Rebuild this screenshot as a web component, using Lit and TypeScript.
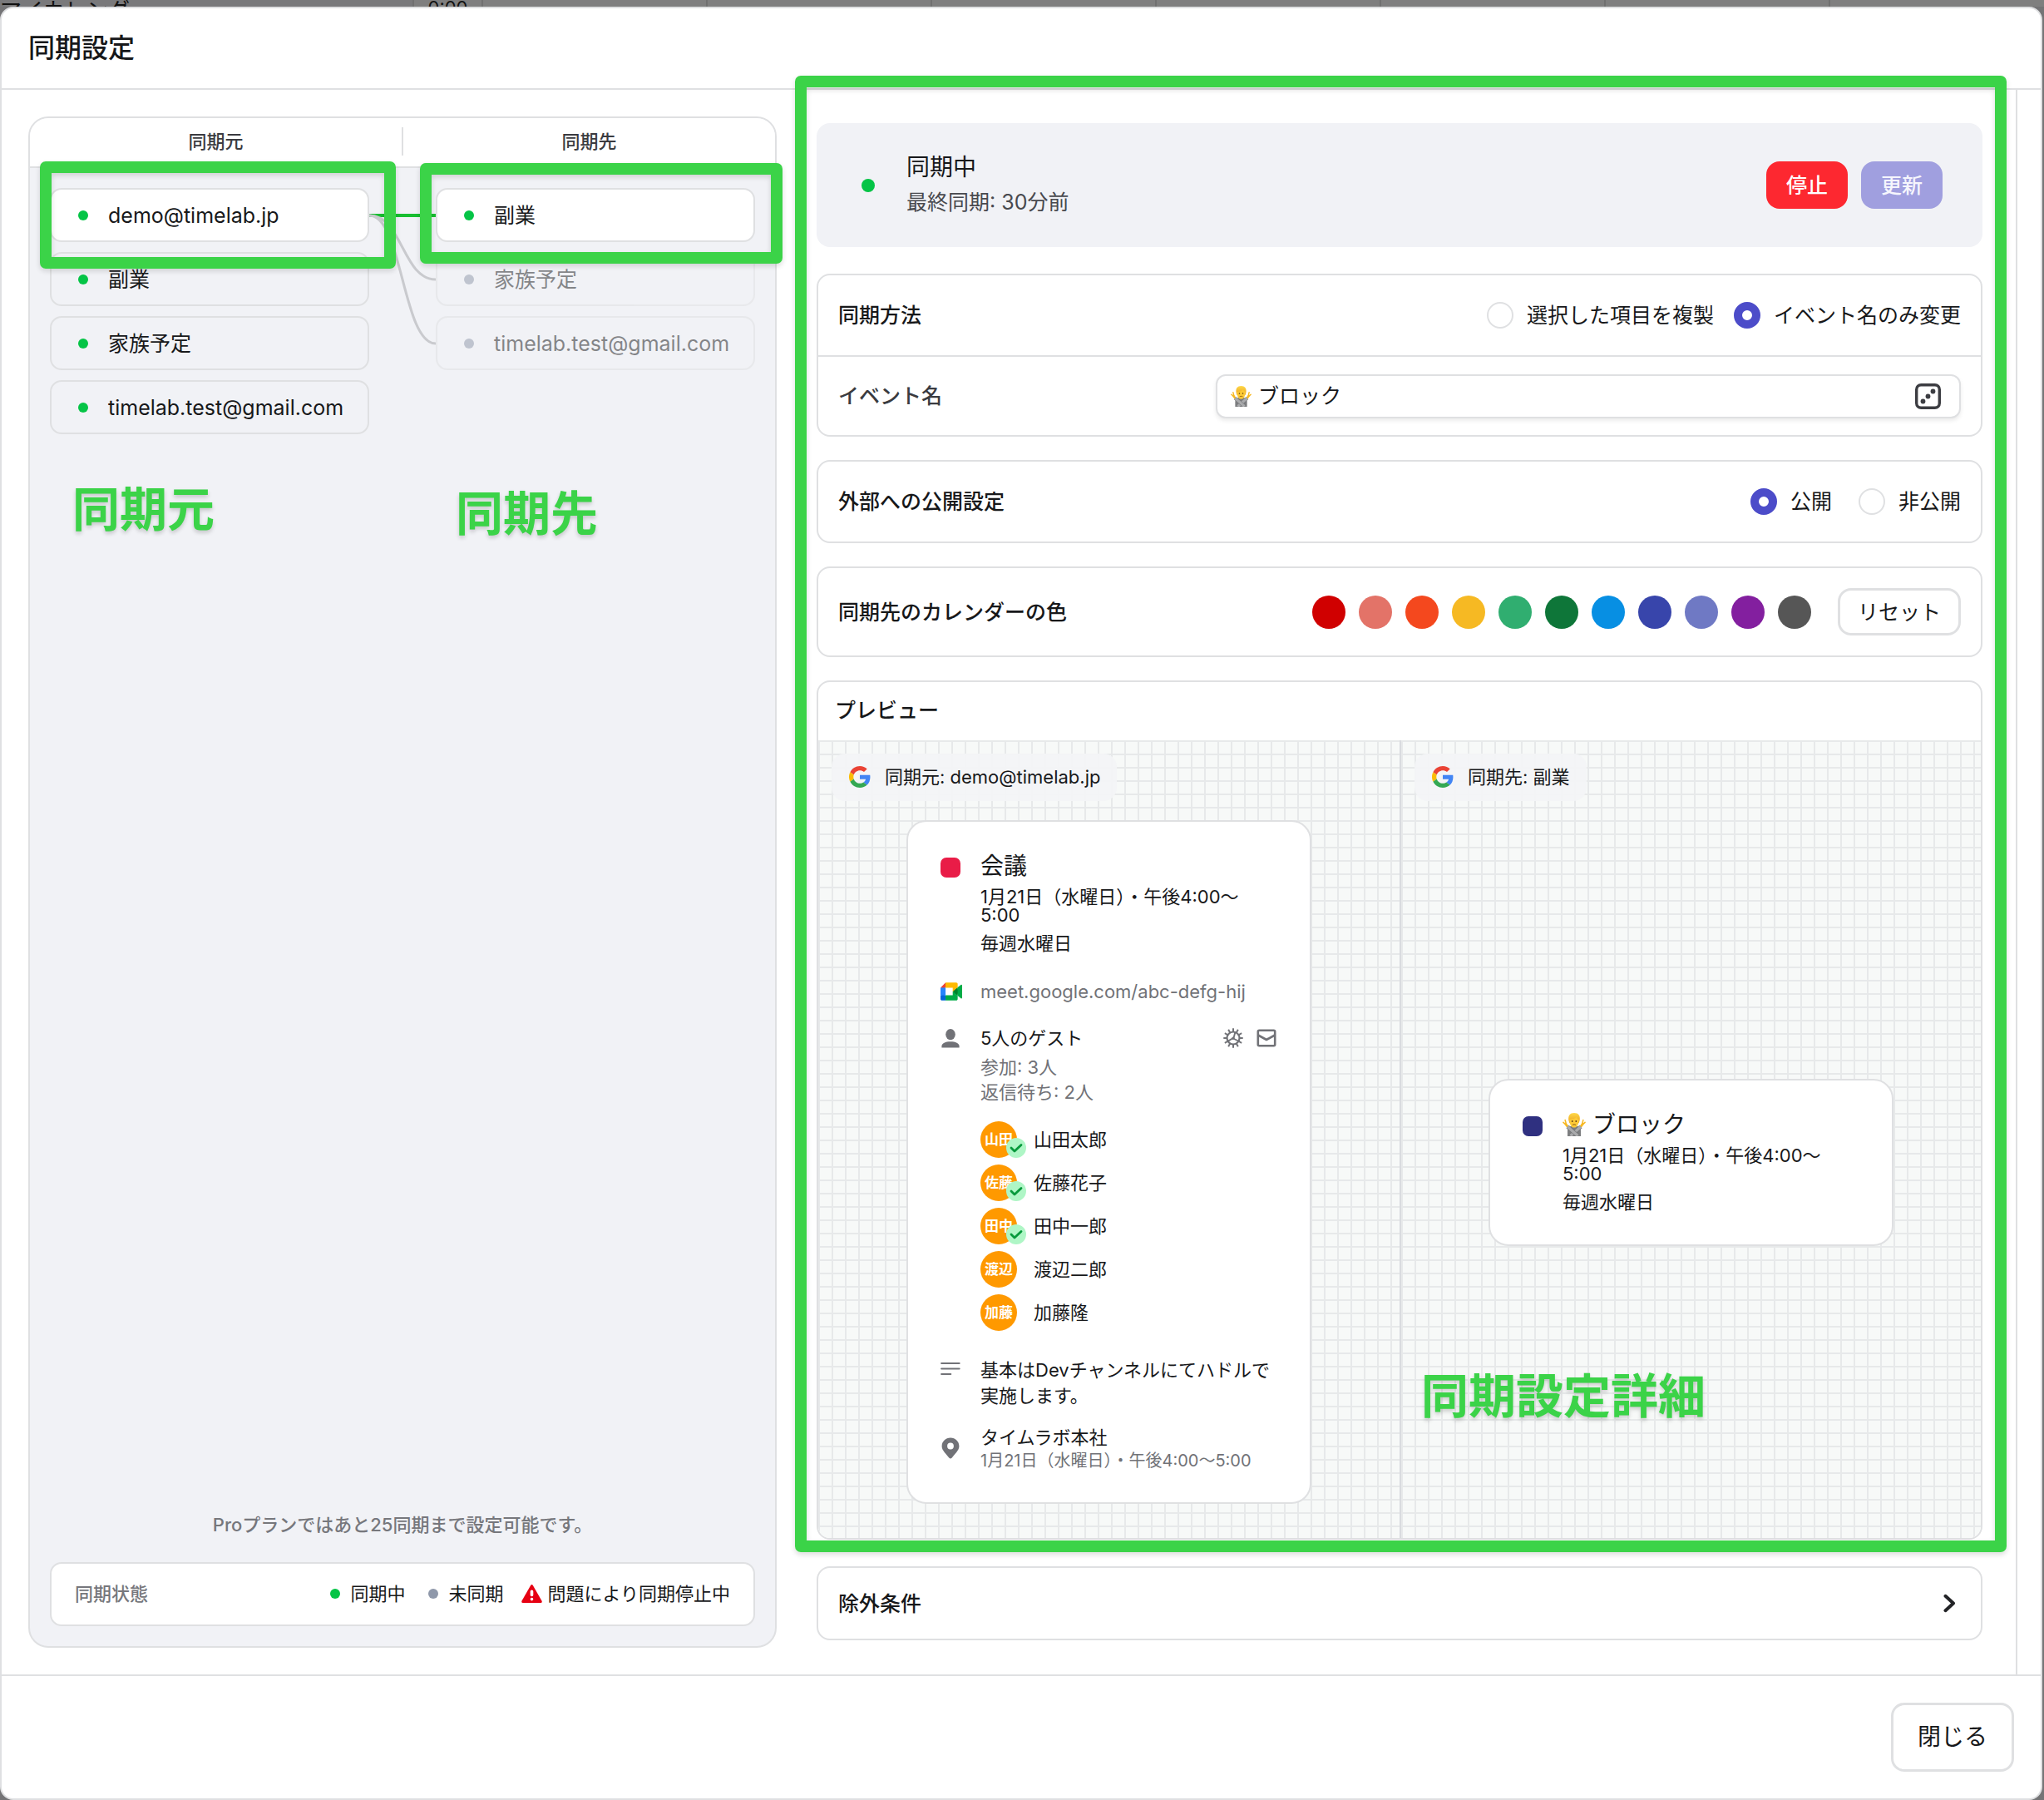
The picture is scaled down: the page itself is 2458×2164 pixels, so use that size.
import { LitElement, html, css, svg } from "lit";
import { customElement, property, state } from "lit/decorators.js";
import { classMap } from "lit/directives/class-map.js";

const base = css`
  *, *::before, *::after { box-sizing: border-box; }
  h1, h2, h3, p, ul { margin: 0; padding: 0; font: inherit; }
  ul { list-style: none; }
  button, input { font: inherit; color: inherit; margin: 0; }
  svg { display: block; flex: none; }
  .frame {
    position: absolute;
    z-index: 3;
    border: 14px solid #3bd348;
    border-radius: 7px;
    box-shadow: 0 3px 6px rgba(0, 0, 0, 0.14), inset 0 3px 6px rgba(0, 0, 0, 0.14);
    pointer-events: none;
  }
  .note {
    position: absolute;
    z-index: 3;
    font-size: 57px;
    line-height: 57px;
    font-weight: 600;
    color: #3bd348;
    text-shadow: 0 3px 5px rgba(0, 0, 0, 0.18);
    white-space: nowrap;
    pointer-events: none;
  }
  .dot { width: 12px; height: 12px; border-radius: 50%; background: #05c446; flex: none; }
  .dot.off { background: #8f98aa; }
`;

const googleIcon = svg`<svg width="26" height="26" viewBox="0 0 48 48" aria-hidden="true">
  <path fill="#EA4335" d="M24 9.5c3.54 0 6.71 1.22 9.21 3.6l6.85-6.85C35.9 2.38 30.47 0 24 0 14.62 0 6.51 5.38 2.56 13.22l7.98 6.19C12.43 13.72 17.74 9.5 24 9.5z"/>
  <path fill="#4285F4" d="M46.98 24.55c0-1.57-.15-3.09-.38-4.55H24v9.02h12.94c-.58 2.96-2.26 5.48-4.78 7.18l7.73 6c4.51-4.18 7.09-10.36 7.09-17.65z"/>
  <path fill="#FBBC05" d="M10.53 28.59c-.48-1.45-.76-2.99-.76-4.59s.27-3.14.76-4.59l-7.98-6.19C.92 16.46 0 20.12 0 24c0 3.88.92 7.54 2.56 10.78l7.97-6.19z"/>
  <path fill="#34A853" d="M24 48c6.48 0 11.93-2.13 15.89-5.81l-7.73-6c-2.15 1.45-4.92 2.3-8.16 2.3-6.26 0-11.57-4.22-13.47-9.91l-7.98 6.19C6.51 42.62 14.62 48 24 48z"/>
</svg>`;

const meetIcon = svg`<svg width="26" height="22" viewBox="0 0 87.5 72" aria-hidden="true">
  <path fill="#00832d" d="M49.5 36l8.53 9.75 11.47 7.33 2-17.02-2-16.64-11.69 6.44z"/>
  <path fill="#0066da" d="M0 51.5V66c0 3.315 2.685 6 6 6h14.5l3-10.96-3-9.54-9.95-3z"/>
  <path fill="#e94235" d="M20.5 0L0 20.5l10.55 3 9.95-3 2.95-9.41z"/>
  <path fill="#2684fc" d="M20.5 20.5H0v31h20.5z"/>
  <path fill="#00ac47" d="M82.6 8.68L69.5 19.42v33.66l13.16 10.79c1.97 1.54 4.85.135 4.85-2.37V11c0-2.535-2.945-3.925-4.91-2.32zM49.5 36v15.5h-29V72h43c3.315 0 6-2.685 6-6V53.08z"/>
  <path fill="#ffba00" d="M63.5 0h-43v20.5h29V36l20-16.57V6c0-3.315-2.685-6-6-6z"/>
</svg>`;

const personIcon = svg`<svg width="24" height="24" viewBox="0 0 24 24" fill="#717277" aria-hidden="true">
  <ellipse cx="12" cy="7.600" rx="5.800" ry="6.600"/><path d="M1.400 23.600v-1.800c0-3.600 4.600-5.600 10.600-5.600s10.600 2 10.600 5.600v1.800z"/>
</svg>`;

const gearIcon = svg`<svg width="24" height="24" viewBox="0 0 24 24" fill="none" stroke="#717277" aria-hidden="true">
  <circle cx="12" cy="12" r="7.500" stroke-width="2.200"/>
  <path stroke-width="2" d="M12 4.500V.3M12 23.700v-4.200M4.500 12H.3M23.700 12h-4.200M8.250 5.500 6.150 1.870M17.850 22.130l-2.100-3.630M5.500 8.250 1.870 6.150M22.130 17.850l-3.630-2.100M5.500 15.750l-3.630 2.100M22.130 6.150 18.500 8.250M8.250 18.500l-2.100 3.630M17.850 1.870 15.750 5.500"/>
  <path stroke-width="1.900" d="M11 12.500 5.800 15.600M12.600 11.400 14.400 5M13 13l5.300 2.500"/>
  <circle cx="12" cy="12.300" r="1.800" fill="#717277" stroke="none"/>
</svg>`;

const mailIcon = svg`<svg width="24" height="22" viewBox="0 0 24 22" fill="none" stroke="#717277" stroke-width="2.600" stroke-linejoin="round" aria-hidden="true">
  <rect x="1.800" y="1.800" width="20.400" height="18.400" rx="1.400"/><path d="M2 7.500 12 13l10-5.500"/>
</svg>`;

const linesIcon = svg`<svg width="24" height="18" viewBox="0 0 24 18" stroke="#717277" stroke-width="2.200" stroke-linecap="round" aria-hidden="true">
  <path d="M1.200 2h21.400M1.200 8.500h21.400M1.200 15h11"/>
</svg>`;

const pinIcon = svg`<svg width="24" height="26" viewBox="0 0 24 26" fill="#717277" fill-rule="evenodd" aria-hidden="true">
  <path d="M12 .6C6.200.6 1.600 5 1.600 10.600c0 4 2 6.300 8.600 13.900q1.800 1.800 3.600 0c6.600-7.600 8.600-9.900 8.600-13.900C22.400 5 17.800.6 12 .6zm0 6a3.900 3.900 0 1 1 0 7.800 3.900 3.900 0 0 1 0-7.800z"/>
</svg>`;

const warnIcon = svg`<svg width="25" height="22" viewBox="0 0 25 22" aria-hidden="true">
  <path fill="#e60012" d="M11.300.8q1.200-1.600 2.400 0L24.600 19.800q.6 2-1.300 2.200H1.700Q-.2 21.800.4 19.800z"/>
  <path stroke="#fff" stroke-width="3.600" stroke-linecap="round" d="M12.500 8.300v4.200M12.500 17.500v.1"/>
</svg>`;

const checkIcon = svg`<svg width="24" height="24" viewBox="0 0 24 24" fill="none" stroke="#079a3c" stroke-width="2.800" stroke-linecap="round" stroke-linejoin="round" aria-hidden="true">
  <path d="m6 12 4 4 8-7.600"/>
</svg>`;

const diceIcon = svg`<svg width="31" height="31" viewBox="0 0 31 31" fill="none" stroke="#3c3d42" aria-hidden="true">
  <rect x="1.700" y="1.700" width="27.600" height="27.600" rx="5.500" stroke-width="3.400"/>
  <g fill="#3c3d42" stroke="none"><circle cx="9.500" cy="21.500" r="2.900"/><circle cx="15.500" cy="15.500" r="2.900"/><circle cx="21.500" cy="9.500" r="2.900"/></g>
</svg>`;

const chevronIcon = svg`<svg width="15" height="23" viewBox="0 0 15 23" fill="none" stroke="#232427" stroke-width="4" stroke-linecap="round" stroke-linejoin="round" aria-hidden="true">
  <path d="m2.500 2.800 9.500 8.700-9.500 8.700"/>
</svg>`;

const noGestureIcon = (size: number) => svg`<svg width="${size}" height="${size}" viewBox="0 0 28 28" role="img" aria-label="ブロック">
  <defs>
    <linearGradient id="hair" x1="0" y1="0" x2="0" y2="1"><stop offset="0" stop-color="#ffd94a"/><stop offset="1" stop-color="#e9a01a"/></linearGradient>
  </defs>
  <path d="M6 28v-6.500c0-4 3-6 8-6s8 2 8 6V28z" fill="#7d7e80"/>
  <path d="M4.800 15 3.200 8.600M4.800 15 1 11.400M23.200 15l1.600-6.400M23.200 15 27 11.400" stroke="#f7b924" stroke-width="1.600" stroke-linecap="round"/>
  <path d="M4 13.600 6.500 17M24 13.600 21.500 17" stroke="#f7b924" stroke-width="2.800" stroke-linecap="round"/>
  <path d="M22 16.500 9.500 27.500" stroke="#6f7072" stroke-width="4.600"/>
  <path d="M22 16.500 9.500 27.500" stroke="#a9aaac" stroke-width="3.600"/>
  <path d="M6 16.500 18.500 27.500" stroke="#6f7072" stroke-width="4.600"/>
  <path d="M6 16.500 18.500 27.500" stroke="#a9aaac" stroke-width="3.600"/>
  <path d="M14 0C8.800 0 6.800 3.400 7.200 7.600c.2 2 .6 3.400 1.400 4.600h10.800c.8-1.200 1.200-2.600 1.400-4.600C21.200 3.400 19.200 0 14 0z" fill="url(#hair)"/>
  <path d="M8.400 7.800c4 .2 6.800-1 8.200-3 .6 1.800 1.700 2.700 3 3C19.600 14 17.600 17.600 14 17.600s-5.600-3.600-5.600-9.800z" fill="#fdca36"/>
  <circle cx="11.700" cy="10" r=".9" fill="#5b3a12"/><circle cx="16.300" cy="10" r=".9" fill="#5b3a12"/>
  <path d="M12.300 14.200q1.700-1 3.400 0" stroke="#8a5a14" stroke-width="1" stroke-linecap="round" fill="none"/>
</svg>`;

interface Calendar { name: string; linked: boolean; }

@customElement("sync-map")
export class SyncMap extends LitElement {
  static styles = [base, css`
    :host { display: grid; }
    .panel {
      display: flex;
      flex-direction: column;
      border: 2px solid #dfe0e2;
      border-radius: 24px;
      background: #f1f2f6;
    }
    .head {
      display: grid;
      grid-template-columns: 1fr 2px 1fr;
      align-items: center;
      height: 60px;
      padding-bottom: 2px;
      background: #fff;
      border-bottom: 2px solid #dfe0e2;
      border-radius: 22px 22px 0 0;
      font-size: 22px;
      line-height: 24px;
      font-weight: 500;
      color: #3a3b40;
      text-align: center;
    }
    .sep { height: 34px; background: #dfe0e2; }
    .map {
      flex: 1;
      display: grid;
      grid-template-columns: minmax(0, 1fr) 80px minmax(0, 1fr);
      align-items: start;
      padding: 24px;
    }
    .list { position: relative; display: grid; grid-template-columns: minmax(0, 1fr); gap: 12px; }
    .item { position: relative; }
    .item.top { z-index: 2; }
    .pick {
      display: flex;
      align-items: center;
      gap: 24px;
      width: 100%;
      height: 65px;
      padding: 0 16px 0 32px;
      border: 2px solid #dfe0e2;
      border-radius: 14px;
      background: none;
      color: #17181a;
      font-size: 25px;
      line-height: 30px;
      text-align: left;
      white-space: nowrap;
    }
    .pick.active { background: #fff; }
    .pick.dim { opacity: 0.5; }
    .frame.source { inset: -32px -32px -32px -12px; }
    .frame.target { inset: -30px -33px -26px -19px; }
    .note.source { top: 358px; left: 27px; }
    .note.target { top: 363px; left: 24px; }
    .links { width: 100%; height: 219px; }
    .quota {
      padding-bottom: 32px;
      text-align: center;
      font-size: 22px;
      line-height: 26px;
      font-weight: 500;
      color: #76777c;
    }
    .legend {
      display: flex;
      align-items: center;
      margin: 0 24px 24px;
      padding: 0 28px 2px;
      height: 77px;
      border: 2px solid #dfe0e2;
      border-radius: 14px;
      background: #fff;
      font-size: 22px;
      line-height: 26px;
      color: #17181a;
    }
    .legend h3 { flex: 1; font-weight: 500; color: #76777c; }
    .states { display: flex; gap: 22px; }
    .states li { display: flex; align-items: center; gap: 12px; }
    .states li:first-child { margin-right: 6px; }
    .states li:last-child { gap: 6px; }
  `];

  private sources: Calendar[] = [
    { name: "demo@timelab.jp", linked: true },
    { name: "副業", linked: true },
    { name: "家族予定", linked: true },
    { name: "timelab.test@gmail.com", linked: true },
  ];

  private targets: Calendar[] = [
    { name: "副業", linked: true },
    { name: "家族予定", linked: false },
    { name: "timelab.test@gmail.com", linked: false },
  ];

  private item(c: Calendar, i: number, side: "source" | "target") {
    return html`<li class=${classMap({ item: true, top: i === 0 })}>
      <button type="button" class=${classMap({ pick: true, active: i === 0, dim: !c.linked })}>
        <span class=${classMap({ dot: true, off: !c.linked })}></span>${c.name}
      </button>
      ${i === 0 ? html`<span class="frame ${side}"></span>` : ""}
    </li>`;
  }

  render() {
    return html`<section class="panel">
      <div class="head"><h2>同期元</h2><span class="sep"></span><h2>同期先</h2></div>
      <div class="map">
        <ul class="list">
          ${this.sources.map((c, i) => this.item(c, i, "source"))}
          <li class="note source">同期元</li>
        </ul>
        <svg class="links" viewBox="0 0 80 219" preserveAspectRatio="none" fill="none" aria-hidden="true">
          <path d="M0 33H80" stroke="#18be31" stroke-width="4"/>
          <path d="M0 33C40 33 40 110 80 110" stroke="#c9cace" stroke-width="3"/>
          <path d="M0 33C40 33 40 187 80 187" stroke="#c9cace" stroke-width="3"/>
        </svg>
        <ul class="list">
          ${this.targets.map((c, i) => this.item(c, i, "target"))}
          <li class="note target">同期先</li>
        </ul>
      </div>
      <p class="quota">Proプランではあと25同期まで設定可能です。</p>
      <div class="legend">
        <h3>同期状態</h3>
        <ul class="states">
          <li><span class="dot"></span>同期中</li>
          <li><span class="dot off"></span>未同期</li>
          <li>${warnIcon}問題により同期停止中</li>
        </ul>
      </div>
    </section>`;
  }
}

@customElement("event-card")
export class EventCard extends LitElement {
  static styles = [base, css`
    :host { display: block; width: 487px; }
    .card {
      padding: 39px 40px 40px 39px;
      border: 2px solid #dfe0e2;
      border-radius: 24px;
      background: #fff;
      color: #17181a;
      font-size: 22px;
      line-height: 24px;
    }
    .row { display: grid; grid-template-columns: 24px minmax(0, 1fr); column-gap: 24px; }
    .row.meet { margin-top: 35px; align-items: center; }
    .row.guests { margin-top: 32px; }
    .row.memo { margin-top: 32px; line-height: 31px; }
    .row.place { margin-top: 22px; align-items: center; }
    .swatch { width: 24px; height: 24px; margin-top: 4px; border-radius: 7px; background: #e91c47; }
    .swatch.navy { background: #2f3080; }
    .title { display: flex; align-items: center; gap: 8px; font-size: 28px; line-height: 28px; }
    .when { margin-top: 12px; line-height: 22px; }
    .link { color: #717277; text-decoration: none; }
    .bar { display: flex; align-items: center; height: 24px; }
    .bar h3 { flex: 1; }
    .tool { padding: 0; border: 0; background: none; }
    .tool + .tool { margin-left: 16px; }
    .count { color: #717277; line-height: 30px; }
    .count.first { margin-top: 8px; }
    .people { display: grid; gap: 8px; margin-top: 20px; }
    .people li { display: flex; align-items: center; gap: 20px; }
    .avatar {
      position: relative;
      display: grid;
      place-items: center;
      width: 44px;
      height: 44px;
      border-radius: 50%;
      background: #ff9900;
      color: #fff;
      font-size: 17px;
      line-height: 20px;
      font-weight: 700;
    }
    .badge { position: absolute; right: -11px; bottom: 0; border-radius: 50%; background: #aff6c6; }
    .memo-icon { padding-top: 5px; }
    .sub { margin-top: 6px; font-size: 20px; line-height: 20px; color: #717277; }
  `];

  @property({ type: Boolean }) blocked = false;

  private guests = [
    { short: "山田", name: "山田太郎", joined: true },
    { short: "佐藤", name: "佐藤花子", joined: true },
    { short: "田中", name: "田中一郎", joined: true },
    { short: "渡辺", name: "渡辺二郎", joined: false },
    { short: "加藤", name: "加藤隆", joined: false },
  ];

  private details() {
    return html`
      <div class="row meet">${meetIcon}<a class="link" href="#meet">meet.google.com/abc-defg-hij</a></div>
      <div class="row guests">
        ${personIcon}
        <div>
          <div class="bar">
            <h3>5人のゲスト</h3>
            <button type="button" class="tool" aria-label="設定">${gearIcon}</button>
            <button type="button" class="tool" aria-label="メール">${mailIcon}</button>
          </div>
          <p class="count first">参加: 3人</p>
          <p class="count">返信待ち: 2人</p>
          <ul class="people">
            ${this.guests.map((g) => html`<li>
              <span class="avatar">${g.short}${g.joined ? html`<span class="badge">${checkIcon}</span>` : ""}</span>${g.name}
            </li>`)}
          </ul>
        </div>
      </div>
      <div class="row memo"><span class="memo-icon">${linesIcon}</span><p>基本はDevチャンネルにてハドルで実施します。</p></div>
      <div class="row place">
        ${pinIcon}
        <div><p>タイムラボ本社</p><p class="sub">1月21日（水曜日）・午後4:00〜5:00</p></div>
      </div>`;
  }

  render() {
    return html`<article class="card">
      <div class="row">
        <span class=${classMap({ swatch: true, navy: this.blocked })}></span>
        <div>
          <h3 class="title">${this.blocked ? html`${noGestureIcon(28)}ブロック` : "会議"}</h3>
          <p class="when">1月21日（水曜日）・午後4:00〜5:00</p>
          <p class="when">毎週水曜日</p>
        </div>
      </div>
      ${this.blocked ? "" : this.details()}
    </article>`;
  }
}

@customElement("sync-detail")
export class SyncDetail extends LitElement {
  static styles = [base, css`
    :host { display: block; color: #17181a; font-size: 25px; line-height: 30px; }
    .framed { position: relative; display: grid; gap: 28px; }
    .frame.detail { inset: -57px -29px -15px -26px; }
    .status {
      display: flex;
      align-items: center;
      gap: 16px;
      height: 149px;
      margin-bottom: 4px;
      padding: 0 48px 0 54px;
      border-radius: 16px;
      background: #f1f2f6;
    }
    .status .dot { width: 16px; height: 16px; }
    .status-text { flex: 1; padding-left: 22px; }
    .state { font-size: 28px; line-height: 40px; }
    .last { line-height: 44px; color: #48494e; }
    .btn {
      height: 57px;
      padding: 0 24px;
      border: 0;
      border-radius: 16px;
      color: #fff;
      font-weight: 500;
      line-height: 30px;
    }
    .btn.stop { background: #fd2830; }
    .btn.update { background: #a09fdf; color: #f6f6fd; }
    .btn.reset {
      margin-left: 16px;
      border: 3px solid #dfe0e2;
      background: #fff;
      color: #17181a;
      font-size: 25px;
      font-weight: 400;
      width: 148px;
      padding: 0;
    }
    .card { border: 2px solid #dfe0e2; border-radius: 16px; background: #fff; }
    .line { display: flex; align-items: center; justify-content: space-between; gap: 16px; height: 96px; padding: 0 24px; }
    .line h2 { font-weight: 500; }
    .line.sub { height: 96px; border-top: 2px solid #dfe0e2; }
    .line.colors { height: 105px; }
    .sub-label { color: #3a3b40; font-weight: 500; }
    .options { display: flex; gap: 24px; }
    .options.wide { gap: 32px; }
    .option { display: flex; align-items: center; gap: 16px; }
    .option input {
      appearance: none;
      width: 32px;
      height: 32px;
      border: 2px solid #dfe0e2;
      border-radius: 50%;
      background: #fff;
    }
    .option input:checked { border: 10px solid #4c4cc9; }
    .field {
      display: flex;
      align-items: center;
      gap: 8px;
      width: calc(200% / 3 - 4px);
      height: 53px;
      padding: 0 22px 0 16px;
      border: 2px solid #dfe0e2;
      border-radius: 12px;
      background: #fff;
      box-shadow: 0 3px 5px rgba(0, 0, 0, 0.08);
    }
    .field input { flex: 1; min-width: 0; border: 0; padding: 0; outline: 0; background: none; }
    .dice { padding: 0; border: 0; background: none; }
    .palette { display: flex; align-items: center; gap: 16px; }
    .color { width: 40px; height: 40px; padding: 0; border: 0; border-radius: 50%; }
    .preview { overflow: hidden; }
    .preview-head { height: 70px; padding: 19px 20px; font-weight: 500; }
    .panes { display: grid; grid-template-columns: minmax(0, 1fr) minmax(0, 1fr); }
    .pane {
      position: relative;
      display: flex;
      flex-direction: column;
      align-items: flex-start;
      padding: 16px;
      background-color: #f7f9f8;
      background-image: linear-gradient(#e7e9ea 2px, transparent 2px), linear-gradient(90deg, #e7e9ea 2px, transparent 2px);
      background-size: 16px 16px;
    }
    .pane + .pane { border-left: 2px solid #d9dbdf; }
    .chip {
      display: flex;
      align-items: center;
      gap: 17px;
      height: 57px;
      padding: 0 20px 2px 21px;
      border-radius: 16px;
      background: #f3f4f6ee;
      font-size: 22px;
      line-height: 26px;
    }
    .stage { flex: 1; display: grid; place-items: center; align-self: stretch; padding: 23px 0 25px; }
    .note.detail { top: 760px; left: 24px; }
    .fold {
      display: flex;
      align-items: center;
      justify-content: space-between;
      width: 100%;
      height: 89px;
      margin-top: 32px;
      padding: 0 30px 0 24px;
      font-weight: 500;
      line-height: 30px;
    }
  `];

  @state() private method = "rename";
  @state() private visibility = "public";

  private colors = [
    ["トマト", "#d00000"], ["フラミンゴ", "#e37368"], ["ミカン", "#f4481e"], ["バナナ", "#f6b923"],
    ["セージ", "#30ae70"], ["バジル", "#0e7639"], ["ピーコック", "#078fe3"], ["ブルーベリー", "#3845ab"],
    ["ラベンダー", "#6f79c4"], ["ブドウ", "#831f9f"], ["グラファイト", "#565656"],
  ];

  private radio(group: "method" | "visibility", value: string, text: string) {
    return html`<label class="option">
      <input type="radio" name=${group} .value=${value} .checked=${this[group] === value}
        @change=${() => { this[group] = value; }}>${text}
    </label>`;
  }

  render() {
    return html`
      <div class="framed">
        <section class="status">
          <span class="dot"></span>
          <div class="status-text"><p class="state">同期中</p><p class="last">最終同期: 30分前</p></div>
          <button type="button" class="btn stop">停止</button>
          <button type="button" class="btn update">更新</button>
        </section>
        <section class="card">
          <div class="line">
            <h2>同期方法</h2>
            <div class="options">
              ${this.radio("method", "copy", "選択した項目を複製")}
              ${this.radio("method", "rename", "イベント名のみ変更")}
            </div>
          </div>
          <div class="line sub">
            <label class="sub-label" for="event-name">イベント名</label>
            <div class="field">
              ${noGestureIcon(25)}
              <input id="event-name" type="text" .value=${"ブロック"}>
              <button type="button" class="dice" aria-label="ランダム">${diceIcon}</button>
            </div>
          </div>
        </section>
        <section class="card">
          <div class="line">
            <h2>外部への公開設定</h2>
            <div class="options wide">
              ${this.radio("visibility", "public", "公開")}
              ${this.radio("visibility", "private", "非公開")}
            </div>
          </div>
        </section>
        <section class="card">
          <div class="line colors">
            <h2>同期先のカレンダーの色</h2>
            <div class="palette">
              ${this.colors.map(([name, value]) => html`<button type="button" class="color" aria-label=${name} style="background:${value}"></button>`)}
              <button type="button" class="btn reset">リセット</button>
            </div>
          </div>
        </section>
        <section class="card preview">
          <h2 class="preview-head">プレビュー</h2>
          <div class="panes">
            <div class="pane">
              <p class="chip">${googleIcon}同期元: demo@timelab.jp</p>
              <div class="stage"><event-card></event-card></div>
            </div>
            <div class="pane">
              <p class="chip">${googleIcon}同期先: 副業</p>
              <div class="stage"><event-card blocked></event-card></div>
              <span class="note detail">同期設定詳細</span>
            </div>
          </div>
        </section>
        <span class="frame detail"></span>
      </div>
      <button type="button" class="card fold">除外条件${chevronIcon}</button>`;
  }
}

@customElement("app-root")
export class AppRoot extends LitElement {
  static styles = [base, css`
    :host {
      display: flex;
      flex-direction: column;
      min-height: 100vh;
      background: #747476;
      color: #17181a;
      font-family: Inter, "Noto Sans CJK JP", sans-serif;
    }
    .behind {
      display: grid;
      grid-template-columns: 496px 85px 1fr;
      height: 8px;
      overflow: hidden;
      background: #7f7f7f;
      color: #101010;
      font-size: 26px;
      line-height: 26px;
    }
    .behind-title { display: flex; justify-content: space-between; align-items: flex-end; background: #79797b; padding: 0 38px 0 0; }
    .behind-time {
      display: flex;
      align-items: flex-start;
      justify-content: center;
      border: 0 solid #707070;
      border-width: 0 2px;
      font-size: 22px;
      line-height: 18px;
    }
    .behind-days { background: repeating-linear-gradient(90deg, transparent 0 268px, #707070 268px 270px); }
    .modal {
      flex: 1;
      display: flex;
      flex-direction: column;
      margin-right: 2px;
      border: 2px solid #dfe0e2;
      border-radius: 16px;
      background: #fff;
    }
    .modal-head { height: 98px; padding: 28px 32px; border-bottom: 2px solid #dfe0e2; }
    .modal-head h1 { font-size: 32px; line-height: 40px; font-weight: 500; }
    .modal-body { flex: 1; display: grid; padding-right: 28px; }
    .columns {
      display: grid;
      grid-template-columns: minmax(0, 450fr) minmax(0, 701fr);
      column-gap: 48px;
      padding: 0 40px 0 32px;
      border-right: 2px solid #dfe0e2;
    }
    sync-map { margin: 32px 0; }
    sync-detail { margin: 40px 0; }
    .modal-foot { display: flex; justify-content: flex-end; padding: 32px; border-top: 2px solid #dfe0e2; }
    .close {
      width: 148px;
      height: 83px;
      padding: 0 0 2px;
      border: 3px solid #dfe0e2;
      border-radius: 16px;
      background: #fff;
      font-size: 28px;
      line-height: 34px;
    }
  `];

  render() {
    return html`
      <div class="behind" aria-hidden="true">
        <div class="behind-title"><span>マイカレンダー</span>
          <svg width="72" height="8" viewBox="0 0 72 8" fill="#101010"><path d="M0 5h6v3H0zM10 5h20v3H10zM62 0h10l-5 4.500z"/></svg>
        </div>
        <div class="behind-time">0:00</div>
        <div class="behind-days"></div>
      </div>
      <main class="modal">
        <header class="modal-head"><h1>同期設定</h1></header>
        <div class="modal-body">
          <div class="columns">
            <sync-map></sync-map>
            <sync-detail></sync-detail>
          </div>
        </div>
        <footer class="modal-foot"><button type="button" class="close">閉じる</button></footer>
      </main>`;
  }
}
